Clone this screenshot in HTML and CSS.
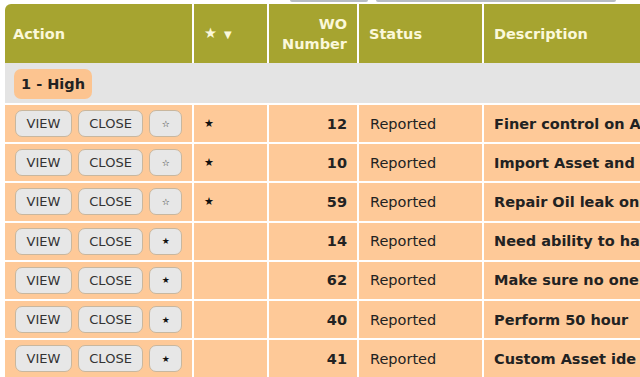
FILE: index.html
```html
<!DOCTYPE html>
<html lang="en">
  <head>
    <meta charset="UTF-8" />
    <meta name="viewport" content="width=device-width, initial-scale=1.0" />
    <title>Work Orders</title>
    <link rel="stylesheet" href="styles.css">
  </head>
  <body>
    <div class="toolbar">
      <span class="toolbar-tab"></span>
      <span class="toolbar-tab wide"></span>
    </div>

    <table class="wo-table">
      <colgroup>
        <col class="col-action" />
        <col class="col-star" />
        <col class="col-number" />
        <col class="col-status" />
        <col class="col-desc" />
      </colgroup>
      <thead>
        <tr>
          <th class="first">Action</th>
          <th>★ <span class="caret">▼</span></th>
          <th class="num">WO<br />Number</th>
          <th>Status</th>
          <th>Description</th>
        </tr>
      </thead>
      <tbody>
        <tr class="group-row">
          <td colspan="5"><span class="group-badge">1 - High</span></td>
        </tr>
        <tr>
          <td class="actions"><button class="btn">View</button><button class="btn">Close</button><button class="btn btn-star">☆</button></td>
          <td class="star">★</td>
          <td class="num">12</td>
          <td class="status">Reported</td>
          <td class="desc">Finer control on A</td>
        </tr>
        <tr>
          <td class="actions"><button class="btn">View</button><button class="btn">Close</button><button class="btn btn-star">☆</button></td>
          <td class="star">★</td>
          <td class="num">10</td>
          <td class="status">Reported</td>
          <td class="desc">Import Asset and</td>
        </tr>
        <tr>
          <td class="actions"><button class="btn">View</button><button class="btn">Close</button><button class="btn btn-star">☆</button></td>
          <td class="star">★</td>
          <td class="num">59</td>
          <td class="status">Reported</td>
          <td class="desc">Repair Oil leak on</td>
        </tr>
        <tr>
          <td class="actions"><button class="btn">View</button><button class="btn">Close</button><button class="btn btn-star">★</button></td>
          <td class="star"></td>
          <td class="num">14</td>
          <td class="status">Reported</td>
          <td class="desc">Need ability to ha</td>
        </tr>
        <tr>
          <td class="actions"><button class="btn">View</button><button class="btn">Close</button><button class="btn btn-star">★</button></td>
          <td class="star"></td>
          <td class="num">62</td>
          <td class="status">Reported</td>
          <td class="desc">Make sure no one</td>
        </tr>
        <tr>
          <td class="actions"><button class="btn">View</button><button class="btn">Close</button><button class="btn btn-star">★</button></td>
          <td class="star"></td>
          <td class="num">40</td>
          <td class="status">Reported</td>
          <td class="desc">Perform 50 hour</td>
        </tr>
        <tr>
          <td class="actions"><button class="btn">View</button><button class="btn">Close</button><button class="btn btn-star">★</button></td>
          <td class="star"></td>
          <td class="num">41</td>
          <td class="status">Reported</td>
          <td class="desc">Custom Asset ide</td>
        </tr>
      </tbody>
    </table>
  </body>
</html>
```

FILE: styles.css
```css
body {
  margin: 0;
  background: #ffffff;
  font-family: "DejaVu Sans", Verdana, sans-serif;
  color: #222;
  overflow: hidden;
}

/* strip of controls scrolled mostly out of view */
.toolbar {
  height: 4px;
  display: flex;
  gap: 8px;
  padding-left: 290px;
  overflow: hidden;
}

.toolbar-tab {
  width: 78px;
  height: 2px;
  background: #b7bcc4;
  border-radius: 0 0 3px 3px;
}

.toolbar-tab.wide {
  width: 240px;
}

.wo-table {
  margin-left: 5px;
  width: 680px;
  table-layout: fixed;
  border-collapse: collapse;
  font-size: 14.5px;
}

.col-action { width: 188px; }
.col-star { width: 75px; }
.col-number { width: 90px; }
.col-status { width: 125px; }
.col-desc { width: 202px; }

.wo-table th {
  background: #a6a430;
  color: #fbf8da;
  font-weight: bold;
  text-align: left;
  height: 59px;
  padding: 0 10px;
  line-height: 20px;
  border-left: 2px solid #fff;
}

.wo-table th.first {
  border-left: none;
  border-top-left-radius: 6px;
  padding-left: 8px;
}

.wo-table th.num {
  text-align: right;
}

.caret {
  font-size: 10px;
  margin-left: 2px;
}

.wo-table td {
  background: #fec998;
  height: 37.2px;
  padding: 0 10px;
  border: 2px solid #fff;
}

.wo-table td:first-child {
  border-left: none;
}

.wo-table .group-row td {
  background: #e4e4e4;
  height: 38px;
  padding: 2px 9px 0;
  border: none;
}

.group-badge {
  display: inline-block;
  background: #fcc490;
  border-radius: 7px;
  padding: 0 7px;
  line-height: 30px;
  font-weight: bold;
}

td.actions {
  white-space: nowrap;
}

.btn {
  font-family: "DejaVu Sans", Verdana, sans-serif;
  font-size: 13px;
  text-transform: uppercase;
  color: #333;
  background: #e7e7e7;
  border: 1px solid #c8b79f;
  border-radius: 7px;
  height: 27px;
  padding: 0 10.5px;
  margin-right: 6px;
  vertical-align: middle;
}

.btn-star {
  width: 33px;
  padding: 0;
  font-size: 9px;
  color: #111;
}

td.star {
  font-size: 11px;
  color: #111;
}

td.num {
  text-align: right;
  font-weight: bold;
}

td.status {
  padding-left: 11px;
}

td.desc {
  font-weight: bold;
  white-space: nowrap;
  overflow: hidden;
}
```
